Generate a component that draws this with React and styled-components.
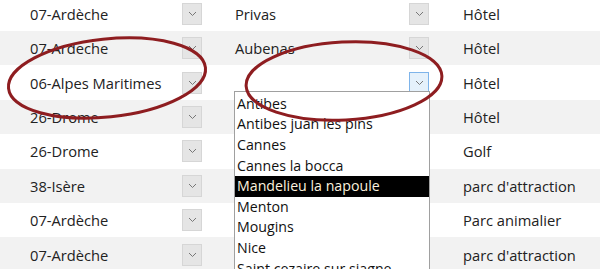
import React from 'react';
import styled, { createGlobalStyle } from 'styled-components';

const rows = [
  { dept: '07-Ardèche', city: 'Privas', kind: 'Hôtel' },
  { dept: '07-Ardeche', city: 'Aubenas', kind: 'Hôtel' },
  { dept: '06-Alpes Maritimes', city: '', kind: 'Hôtel', open: true },
  { dept: '26-Drome', city: '', kind: 'Hôtel' },
  { dept: '26-Drome', city: '', kind: 'Golf' },
  { dept: '38-Isère', city: '', kind: "parc d'attraction" },
  { dept: '07-Ardèche', city: '', kind: 'Parc animalier' },
  { dept: '07-Ardèche', city: '', kind: "parc d'attraction" },
];

const cities = [
  'Antibes',
  'Antibes juan les pins',
  'Cannes',
  'Cannes la bocca',
  'Mandelieu la napoule',
  'Menton',
  'Mougins',
  'Nice',
  'Saint cezaire sur siagne',
];

const Chevron = () => (
  <svg width="9" height="6" viewBox="0 0 9 6">
    <path d="M1 1 L4.5 4.5 L8 1" fill="none" stroke="#777" strokeWidth="1" />
  </svg>
);

const App = () => {
  return (
    <>
      <GlobalStyle />
      <Sheet>
        {rows.map((r, i) => (
          <Row key={i} striped={i % 2 === 1}>
            <Cell>{r.dept}</Cell>
            <DropButton><Chevron /></DropButton>
            <span />
            <Cell>{r.city}</Cell>
            <ComboWrap>
              <DropButton active={r.open}><Chevron /></DropButton>
              {r.open && (
                <ListBox>
                  {cities.map((c) => (
                    <ListItem key={c} selected={c === 'Mandelieu la napoule'}>{c}</ListItem>
                  ))}
                </ListBox>
              )}
            </ComboWrap>
            <span />
            <Cell>{r.kind}</Cell>
          </Row>
        ))}
        <Marks width="600" height="269" viewBox="0 0 600 269">
          <ellipse cx="107" cy="78" rx="99" ry="39" transform="rotate(-6 107 78)" fill="none" stroke="#8e1d20" strokeWidth="3" />
          <ellipse cx="344" cy="81" rx="98" ry="39" transform="rotate(-3 344 81)" fill="none" stroke="#8e1d20" strokeWidth="3" />
        </Marks>
      </Sheet>
    </>
  );
};

export default App;

//styles

const GlobalStyle = createGlobalStyle`
html, body {
  margin: 0;
  padding: 0;
  background: #fff;
  overflow: hidden;
}
body {
  font-family: "Open Sans", "Noto Sans", sans-serif;
}`;

const Sheet = styled.div`
position: relative;
width: 600px;
height: 269px;
overflow: hidden;
& > div:first-child {
  margin-top: -3.4px;
}`;

const Row = styled.div`
display: grid;
grid-template-columns: 182px 20px 33px 174px 20px 34px 1fr;
align-items: center;
height: 34.4px;
background: ${({ striped }) => (striped ? '#f2f2f2' : '#fff')};`;

const Cell = styled.div`
font-size: 14.7px;
color: #222;
white-space: nowrap;
&:first-child {
  padding-left: 30px;
}`;

const ComboWrap = styled.div`
position: relative;
height: 100%;
display: flex;
align-items: center;`;

const DropButton = styled.div`
width: 20px;
height: 22px;
box-sizing: border-box;
display: flex;
align-items: center;
justify-content: center;
background: ${({ active }) => (active ? '#e5f1fb' : '#e5e5e5')};
border: 1px solid ${({ active }) => (active ? '#7eb4ea' : '#d6d6d6')};`;

const ListBox = styled.div`
position: absolute;
top: 25.5px;
right: -1px;
width: 196px;
box-sizing: border-box;
background: #fff;
border: 1px solid #a0a0a0;
padding-top: 2px;
z-index: 5;`;

const ListItem = styled.div`
height: 20.6px;
line-height: 20.6px;
padding-left: 2px;
font-size: 14.2px;
white-space: nowrap;
color: ${({ selected }) => (selected ? '#fbf1de' : '#111')};
background: ${({ selected }) => (selected ? '#000' : 'transparent')};`;

const Marks = styled.svg`
position: absolute;
top: 0;
left: 0;
pointer-events: none;
z-index: 10;`;
